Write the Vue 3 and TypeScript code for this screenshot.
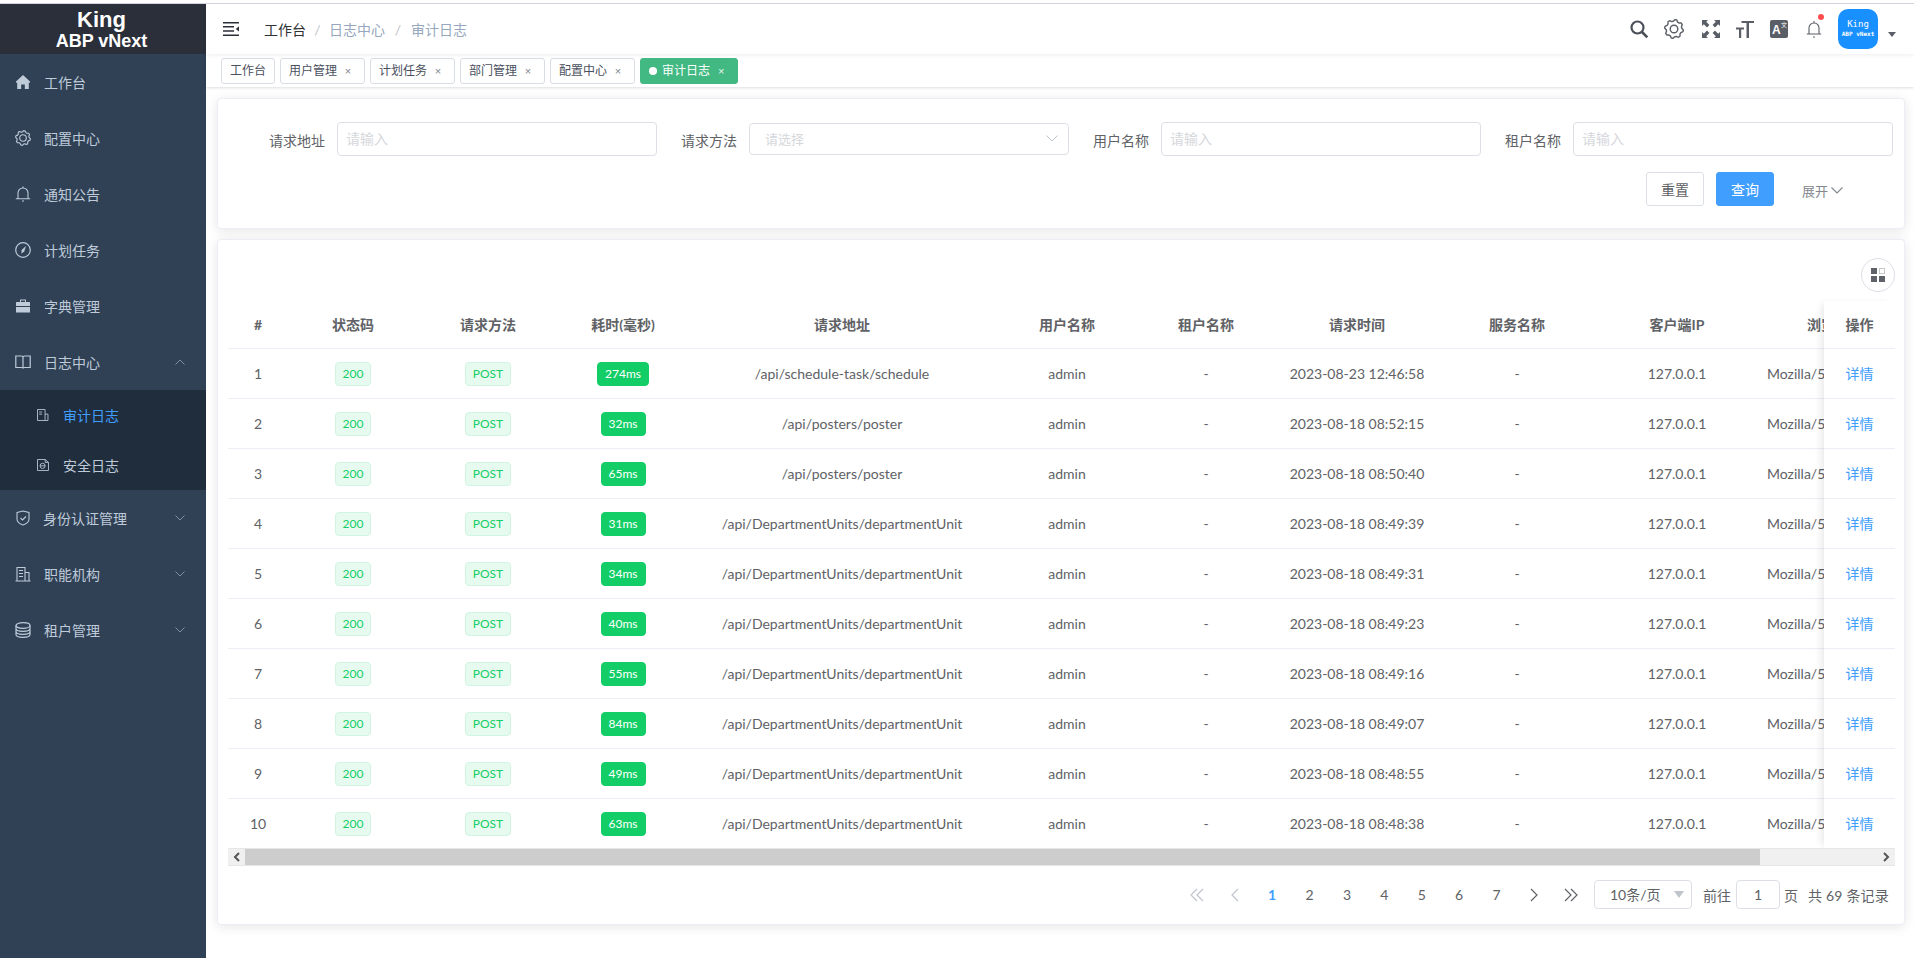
<script setup lang="ts">
interface Row { no: number; ms: number; url: string; time: string }
const schedule = '/api/schedule-task/schedule'
const poster = '/api/posters/poster'
const dept = '/api/DepartmentUnits/departmentUnit'
const rows: Row[] = [
  { no: 1, ms: 274, url: schedule, time: '2023-08-23 12:46:58' },
  { no: 2, ms: 32, url: poster, time: '2023-08-18 08:52:15' },
  { no: 3, ms: 65, url: poster, time: '2023-08-18 08:50:40' },
  { no: 4, ms: 31, url: dept, time: '2023-08-18 08:49:39' },
  { no: 5, ms: 34, url: dept, time: '2023-08-18 08:49:31' },
  { no: 6, ms: 40, url: dept, time: '2023-08-18 08:49:23' },
  { no: 7, ms: 55, url: dept, time: '2023-08-18 08:49:16' },
  { no: 8, ms: 84, url: dept, time: '2023-08-18 08:49:07' },
  { no: 9, ms: 49, url: dept, time: '2023-08-18 08:48:55' },
  { no: 10, ms: 63, url: dept, time: '2023-08-18 08:48:38' },
]
const columns = [
  { t: '#', w: 60 }, { t: '状态码', w: 130 }, { t: '请求方法', w: 140 }, { t: '耗时(毫秒)', w: 130 },
  { t: '请求地址', w: 308 }, { t: '用户名称', w: 142 }, { t: '租户名称', w: 136 }, { t: '请求时间', w: 166 },
  { t: '服务名称', w: 154 }, { t: '客户端IP', w: 166 }, { t: '浏览器', w: 136 },
]
const tags = ['用户管理', '计划任务', '部门管理', '配置中心']
const filters = [
  { label: '请求地址', ph: '请输入', select: false },
  { label: '请求方法', ph: '请选择', select: true },
  { label: '用户名称', ph: '请输入', select: false },
  { label: '租户名称', ph: '请输入', select: false },
]
const pages = [1, 2, 3, 4, 5, 6, 7]

function gear(size: number, teeth: number, outer: number, inner: number): string {
  const c = size / 2
  const pts: string[] = []
  const n = teeth * 4
  for (let i = 0; i < n; i++) {
    const a = ((i + 0.5) / n) * Math.PI * 2
    const r = i % 4 < 2 ? outer : inner
    pts.push(`${(c + r * Math.cos(a)).toFixed(2)} ${(c + r * Math.sin(a)).toFixed(2)}`)
  }
  return 'M' + pts.join('L') + 'Z'
}
const gearSmall = gear(16, 8, 7.4, 6.1)
const gearBig = gear(20, 8, 9.4, 7.8)
</script>

<template>
  <div class="app">
    <aside class="side">
      <div class="logo">
        <div class="logo-a">King</div>
        <div class="logo-b">ABP vNext</div>
      </div>
      <nav>
        <div class="mi">
          <svg class="ic" viewBox="0 0 16 16"><path fill="currentColor" d="M8 1 1 7.600v1.200h1.200V15h4V10.400h3.600V15h4V8.800H15V7.600z"/></svg>
          <span>工作台</span>
        </div>
        <div class="mi">
          <svg class="ic" viewBox="0 0 16 16" fill="none" stroke="currentColor" stroke-width="1.100" stroke-linejoin="round"><path :d="gearSmall"/><circle cx="8" cy="8" r="3.300"/></svg>
          <span>配置中心</span>
        </div>
        <div class="mi">
          <svg class="ic" viewBox="0 0 16 16" fill="none" stroke="currentColor" stroke-width="1.100"><path d="M3 12.500V7a5 5 0 0 1 10 0v5.500M.8 12.800h14.400"/><path d="M8 .5V2M7 15h2"/></svg>
          <span>通知公告</span>
        </div>
        <div class="mi">
          <svg class="ic" viewBox="0 0 16 16"><circle cx="8" cy="8" r="7.300" fill="none" stroke="currentColor" stroke-width="1.200"/><path fill="currentColor" d="M11 4 9.300 9.300 6.400 11.800 6.600 8z"/></svg>
          <span>计划任务</span>
        </div>
        <div class="mi">
          <svg class="ic" viewBox="0 0 16 16"><path fill="currentColor" d="M5 1.500h6V4h3.500A.5.5 0 0 1 15 4.500V8H1V4.500A.5.5 0 0 1 1.500 4H5zm1 1V4h4V2.500zM1 9h14v5.500H1z"/></svg>
          <span>字典管理</span>
        </div>
        <div class="mi">
          <svg class="ic" viewBox="0 0 16 16" fill="none" stroke="currentColor" stroke-width="1.200"><path d="M.8 2H6.500C7.500 2 8 2.600 8 3.500V14.500C8 13.800 7.500 13.500 6.800 13.500H.8zM15.200 2H9.500C8.500 2 8 2.600 8 3.500V14.500C8 13.800 8.500 13.500 9.200 13.500H15.200z"/></svg>
          <span>日志中心</span>
          <svg class="chev" viewBox="0 0 10 6" fill="none" stroke="currentColor"><path d="M.5 5.500 5 1l4.500 4.500"/></svg>
        </div>
        <div class="sub">
          <div class="si active">
            <svg class="sic" viewBox="0 0 14 14" fill="none" stroke="#bfcbd9" stroke-width="1"><path d="M.6.600H9.400V13.400H.6zM2.500 3.500H6M2.500 6H6M9.400 6H12.800V13.400H9.400"/></svg>
            <span>审计日志</span>
          </div>
          <div class="si">
            <svg class="sic" viewBox="0 0 14 14" fill="none" stroke="#bfcbd9" stroke-width="1"><path d="M.6.600H9.500L13.400 4V13.400H.6zM9.500.6V4H13.400"/><circle cx="6.500" cy="8" r="3"/><path d="M3.500 8H9.500"/></svg>
            <span>安全日志</span>
          </div>
        </div>
        <div class="mi wide">
          <svg class="ic" viewBox="0 0 16 16" fill="none" stroke="currentColor" stroke-width="1.100"><path d="M2 2.500 8 1l6 1.500V9c0 3-3 5-6 6-3-1-6-3-6-6z"/><path d="m5.500 8 2 2 3.500-3.500"/></svg>
          <span>身份认证管理</span>
          <svg class="chev" viewBox="0 0 10 6" fill="none" stroke="currentColor"><path d="M.5.500 5 5 9.500.5"/></svg>
        </div>
        <div class="mi">
          <svg class="ic" viewBox="0 0 16 16" fill="none" stroke="currentColor" stroke-width="1.100"><path d="M.5 15H15.500M2 15V1.500H10V15M10 6.500H14V15M4 4.500H8M4 7.500H8M4 10.500H8"/></svg>
          <span>职能机构</span>
          <svg class="chev" viewBox="0 0 10 6" fill="none" stroke="currentColor"><path d="M.5.500 5 5 9.500.5"/></svg>
        </div>
        <div class="mi">
          <svg class="ic" viewBox="0 0 16 16" fill="none" stroke="currentColor" stroke-width="1.200"><ellipse cx="8" cy="3.500" rx="7" ry="2.800"/><path d="M1 3.500V12.500C1 14 4 15.300 8 15.300S15 14 15 12.500V3.500M1 6.500C1 8 4 9.300 8 9.300S15 8 15 6.500M1 9.500C1 11 4 12.300 8 12.300S15 11 15 9.500"/></svg>
          <span>租户管理</span>
          <svg class="chev" viewBox="0 0 10 6" fill="none" stroke="currentColor"><path d="M.5.500 5 5 9.500.5"/></svg>
        </div>
      </nav>
    </aside>

    <main class="main">
      <header class="navbar">
        <svg class="burger" viewBox="0 0 16 14"><path fill="#2b2f3a" d="M0 0h16v1.600H0zM0 4h11v1.600H0zM0 8.200h11v1.600H0zM0 12.400h16V14H0zM16 4.200v5.400l-3.200-2.700z"/></svg>
        <div class="crumbs">
          <span class="c0">工作台</span><i>/</i><span>日志中心</span><i>/</i><span>审计日志</span>
        </div>
        <div class="tools">
          <svg class="t" viewBox="0 0 18 18" fill="none" stroke="#4a4f58" stroke-width="2.200"><circle cx="7.500" cy="7.500" r="6"/><path d="m12 12 5.300 5.300" stroke-width="2.600"/></svg>
          <svg class="t t-gear" viewBox="0 0 20 20" fill="none" stroke="#5a5e66" stroke-width="1.400" stroke-linejoin="round"><path :d="gearBig"/><circle cx="10" cy="10" r="3.800"/></svg>
          <svg class="t t-full" viewBox="0 0 18 18"><path fill="#5a5e66" d="M0 0h6L4.200 1.800 7.400 5 5 7.400 1.800 4.200 0 6zM18 0v6l-1.800-1.800L13 7.400 10.600 5l3.200-3.200L12 0zM0 18v-6l1.800 1.800L5 10.600 7.400 13l-3.200 3.200L6 18zM18 18h-6l1.800-1.800L10.600 13l2.400-2.400 3.200 3.200L18 12z"/></svg>
          <svg class="t t-size" viewBox="0 0 18 18"><path fill="#5a5e66" d="M5.500 1h12.500v2h-5v15h-2.500V3h-5zM0 7.500h8v2H5.200V18H3V9.500H0z"/></svg>
          <div class="trans"><span class="ta">A</span><span class="tz">文</span></div>
          <div class="bell">
            <svg viewBox="0 0 16 18" fill="none" stroke="#5a5e66" stroke-width="1.100"><path d="M3 13.500V8a5 5 0 0 1 10 0v5.500M.8 14h14.400M8 1v2"/><path d="M7 17h2"/></svg>
            <b></b>
          </div>
          <div class="avatar"><span class="av-a">King</span><span class="av-b">ABP vNext</span></div>
          <span class="caret"></span>
        </div>
      </header>
      <div class="tagbar">
        <span class="tag">工作台</span>
        <span v-for="t in tags" :key="t" class="tag">{{ t }}<em>×</em></span>
        <span class="tag on"><u></u>审计日志<em>×</em></span>
      </div>

      <div class="content">
        <section class="card search">
          <div class="form">
            <div v-for="f in filters" :key="f.label" class="fi">
              <label>{{ f.label }}</label>
              <div class="inp" :class="{ sel: f.select }">
                {{ f.ph }}
                <svg v-if="f.select" viewBox="0 0 12 7" fill="none" stroke="#c0c4cc"><path d="M.5.500 6 6 11.500.5"/></svg>
              </div>
            </div>
          </div>
          <div class="btns">
            <button class="btn" type="button">重置</button>
            <button class="btn pri" type="button">查询</button>
            <span class="expand">展开<svg viewBox="0 0 12 7" fill="none" stroke="#82868e" stroke-width="1.100"><path d="M.5.500 6 6 11.500.5"/></svg></span>
          </div>
        </section>

        <section class="card list">
          <div class="bar">
            <div class="circle">
              <svg viewBox="0 0 14 14"><path fill="#5f6268" d="M0 0h6v6H0zM0 8h6v6H0zM8 8h6v6H8z"/><path fill="none" stroke="#8d9096" stroke-dasharray="1 1" d="M8.500.5h5v5h-5z"/></svg>
            </div>
          </div>
          <div class="twrap">
            <div class="tscroll">
              <table>
                <colgroup><col v-for="c in columns" :key="c.t" :style="{ width: c.w + 'px' }" /></colgroup>
                <thead>
                  <tr><th v-for="c in columns" :key="c.t">{{ c.t }}</th></tr>
                </thead>
                <tbody>
                  <tr v-for="r in rows" :key="r.no">
                    <td>{{ r.no }}</td>
                    <td><span class="bd">200</span></td>
                    <td><span class="bd">POST</span></td>
                    <td><span class="bd solid">{{ r.ms }}ms</span></td>
                    <td>{{ r.url }}</td>
                    <td>admin</td>
                    <td>-</td>
                    <td>{{ r.time }}</td>
                    <td>-</td>
                    <td>127.0.0.1</td>
                    <td class="ua">Mozilla/5.0 (Windows NT 10.0)</td>
                  </tr>
                </tbody>
              </table>
            </div>
            <div class="fixed">
              <div class="fh">操作</div>
              <div v-for="r in rows" :key="r.no" class="fc">详情</div>
            </div>
            <div class="hbar">
              <span class="sb-l"><svg viewBox="0 0 7 10" fill="none" stroke="#555" stroke-width="2"><path d="M6 1 2 5l4 4"/></svg></span>
              <span class="thumb"></span>
              <span class="sb-r"><svg viewBox="0 0 7 10" fill="none" stroke="#555" stroke-width="2"><path d="m1 1 4 4-4 4"/></svg></span>
            </div>
          </div>
          <div class="pager">
            <span class="pi off"><svg viewBox="0 0 14 14" fill="none" stroke="#c0c4cc" stroke-width="1.200"><path d="M7 1 1 7l6 6M13 1 7 7l6 6"/></svg></span>
            <span class="pi off"><svg class="one" viewBox="0 0 8 14" fill="none" stroke="#c0c4cc" stroke-width="1.200"><path d="M7 1 1 7l6 6"/></svg></span>
            <span v-for="p in pages" :key="p" class="pi" :class="{ cur: p === 1 }">{{ p }}</span>
            <span class="pi"><svg class="one" viewBox="0 0 8 14" fill="none" stroke="#606266" stroke-width="1.200"><path d="m1 1 6 6-6 6"/></svg></span>
            <span class="pi"><svg viewBox="0 0 14 14" fill="none" stroke="#606266" stroke-width="1.200"><path d="m1 1 6 6-6 6M7 1l6 6-6 6"/></svg></span>
            <div class="psize">10条/页<i></i></div>
            <span class="goto">前往</span>
            <div class="pinput">1</div>
            <span class="ye">页</span>
            <span class="total">共 69 条记录</span>
          </div>
        </section>
      </div>
    </main>
  </div>
</template>

<style>
html, body { margin: 0; background: #fff; }
</style>

<style scoped>
.app {
  display: flex;
  height: 955px;
  padding-top: 3px;
  font-family: Lato, "Noto Sans CJK SC", sans-serif;
  font-size: 14px;
  color: #606266;
  overflow: hidden;
  box-sizing: content-box;
  position: relative;
}
.app::before {
  content: "";
  position: absolute;
  left: 0;
  right: 0;
  top: 3px;
  height: 1px;
  background: #d4d4dc;
  z-index: 5;
}
.app > * { margin-top: 1px; }
.side { width: 206px; flex: none; background: #304156; color: #bfcbd9; }
.logo { height: 50px; background: #2b2f3a; color: #fff; text-align: center; font-family: "Liberation Sans", sans-serif; font-weight: 700; padding: 4px 3px 0 0; box-sizing: border-box; }
.logo-a { font-size: 22px; line-height: 24px; }
.logo-b { font-size: 18px; line-height: 18px; }
.mi { height: 56px; display: flex; align-items: center; padding-left: 15px; padding-right: 20px; position: relative; }
.mi span { margin-left: 13px; }
.mi.wide span { margin-left: 12px; }
.ic { width: 16px; height: 16px; flex: none; }
.chev { width: 10px; height: 6px; position: absolute; left: 175px; top: 25px; opacity: .55; }
.sub { background: #1f2d3d; }
.si { height: 50px; display: flex; align-items: center; padding-left: 37px; }
.si span { margin-left: 14px; }
.si.active { color: #409eff; }
.sic { width: 12px; height: 14px; flex: none; }

.main { flex: 1; min-width: 0; display: flex; flex-direction: column; }
.navbar { height: 50px; flex: none; display: flex; align-items: center; padding-left: 17px; background: #fff; box-shadow: 0 1px 4px rgba(0, 21, 41, .08); position: relative; z-index: 2; }
.burger { width: 16px; height: 14px; flex: none; margin-top: -1px; }
.crumbs { margin-left: 25px; color: #97a8be; display: flex; align-items: center; }
.crumbs .c0 { color: #303133; }
.crumbs i { font-style: normal; color: #c0c4cc; width: 23px; text-align: center; }
.crumbs span + i + span + i { width: 26px; }
.tools { margin-left: auto; display: flex; align-items: center; position: relative; height: 50px; width: 284px; }
.t { width: 18px; height: 18px; flex: none; margin-right: 16px; }
.t-gear { width: 20px; height: 20px; margin-right: 18px; }
.trans { width: 18px; height: 18px; background: #5a5e66; border-radius: 2px; position: relative; color: #fff; flex: none; margin-right: 18px; overflow: hidden; font-family: "Liberation Sans", sans-serif; }
.ta { position: absolute; left: 2px; top: 4px; font-size: 12px; line-height: 13px; font-weight: 700; }
.tz { position: absolute; right: 1px; top: 1px; font-size: 6px; line-height: 7px; font-family: "Noto Sans CJK SC", sans-serif; }
.bell { width: 16px; height: 18px; position: relative; flex: none; margin-right: 16px; }
.bell svg { width: 16px; height: 18px; display: block; }
.bell b { position: absolute; width: 6px; height: 6px; border-radius: 50%; background: #ff4d4f; right: -2px; top: -6px; box-shadow: 0 0 0 1px #fff; }
.avatar { width: 40px; height: 40px; border-radius: 10px; background: #1890ff; color: #fff; display: flex; flex-direction: column; align-items: center; justify-content: center; font-family: "DejaVu Sans Mono", monospace; flex: none; }
.av-a { font-size: 9px; line-height: 10px; }
.av-b { font-size: 6px; line-height: 10px; font-weight: 700; }
.caret { width: 0; height: 0; border: 4px solid transparent; border-top: 5px solid #5a5e66; border-bottom: 0; margin-left: 10px; margin-top: 11px; flex: none; }

.tagbar { height: 33px; flex: none; box-sizing: border-box; display: flex; gap: 5px; padding: 4px 0 0 15px; background: #fff; box-shadow: 0 1px 3px 0 rgba(0, 0, 0, .12), 0 0 3px 0 rgba(0, 0, 0, .04); position: relative; z-index: 1; }
.tag { height: 26px; box-sizing: border-box; border: 1px solid #d8dce5; border-radius: 3px; padding: 0 8px; font-size: 12px; line-height: 24px; color: #495060; background: #fff; white-space: nowrap; }
.tag em { display: inline-block; width: 8px; text-align: center; font-style: normal; font-family: "Liberation Sans", sans-serif; font-size: 11px; color: #7f858f; margin: 0 4px 0 7px; }
.tag.on { background: #42b983; border-color: #42b983; color: #fff; }
.tag.on em { color: #e6f5ee; }
.tag u { display: inline-block; width: 8px; height: 8px; background: #fff; border-radius: 50%; margin-right: 5px; }

.content { flex: 1; padding: 11px 9px 0 11px; }
.card { background: #fff; border: 1px solid #ebeef5; border-radius: 4px; box-shadow: 0 2px 12px 0 rgba(0, 0, 0, .1); box-sizing: border-box; }
.search { height: 131px; margin-bottom: 10px; padding-top: 23px; }
.form { display: grid; grid-template-columns: repeat(4, 412px); padding-left: 27px; }
.fi { display: flex; align-items: center; }
.fi label { width: 92px; box-sizing: border-box; padding-right: 12px; text-align: right; position: relative; top: 1px; }
.inp { width: 320px; height: 34px; box-sizing: border-box; border: 1px solid #dcdfe6; border-radius: 4px; padding-left: 8px; line-height: 32px; color: #d5d7dc; position: relative; }
.inp.sel { height: 32px; padding-left: 15px; font-size: 13px; line-height: 31px; }
.inp svg { position: absolute; right: 10px; top: 11px; width: 12px; height: 7px; }
.btns { display: flex; align-items: center; padding-left: 1428px; margin-top: 16px; }
.btn { width: 58px; height: 34px; box-sizing: border-box; border: 1px solid #dcdfe6; border-radius: 3px; background: #fff; color: #606266; font: inherit; font-size: 14px; padding: 0; }
.btn.pri { background: #409eff; border-color: #409eff; color: #fff; margin-left: 12px; }
.expand { margin-left: 28px; font-size: 13px; color: #82868e; display: flex; align-items: center; position: relative; top: 1px; }
.expand svg { width: 12px; height: 7px; margin-left: 3px; }

.list { height: 686px; padding: 18px 9px 0 10px; }
.bar { display: flex; justify-content: flex-end; height: 34px; margin-bottom: 8px; }
.circle { width: 34px; height: 34px; box-sizing: border-box; border: 1px solid #dcdfe6; border-radius: 50%; display: flex; align-items: center; justify-content: center; }
.circle svg { width: 14px; height: 14px; }
.twrap { position: relative; height: 566px; }
.tscroll { overflow: hidden; height: 548px; }
table { border-collapse: separate; border-spacing: 0; table-layout: fixed; width: 1668px; }
th { height: 48px; padding: 0; font-size: 14px; font-weight: 700; color: #606266; border-bottom: 1px solid #ebeef5; text-align: center; white-space: nowrap; box-sizing: content-box; }
td { height: 49px; padding: 0; text-align: center; border-bottom: 1px solid #ebeef5; white-space: nowrap; overflow: hidden; box-sizing: content-box; }
td.ua { text-align: left; padding-left: 7px; }
tbody tr:last-child td { border-bottom: 0; }
.bd { display: inline-block; height: 24px; line-height: 22px; box-sizing: border-box; padding: 0 7px; font-size: 12px; border: 1px solid #d0f5e0; background: #e7faf0; color: #13ce66; border-radius: 4px; vertical-align: middle; }
.bd.solid { background: #13ce66; border-color: #13ce66; color: #fff; }
.fixed { position: absolute; right: 0; top: 1px; width: 71px; background: #fff; box-shadow: -5px 0 8px -3px rgba(0, 0, 0, .1); text-align: center; height: 547px; z-index: 1; }
.fh { height: 47px; line-height: 47px; font-weight: 700; border-bottom: 1px solid #ebeef5; }
.fc { height: 49px; line-height: 49px; color: #409eff; border-bottom: 1px solid #ebeef5; }
.fc:last-child { border-bottom: 0; }
.hbar { position: absolute; left: 0; right: 0; bottom: 0; height: 18px; background: #f0f0f0; display: flex; box-sizing: border-box; border-top: 1px solid #e6e6e6; border-bottom: 1px solid #e6e6e6; z-index: 2; }
.sb-l, .sb-r { width: 17px; display: flex; align-items: center; justify-content: center; flex: none; }
.sb-l svg, .sb-r svg { width: 7px; height: 10px; }
.sb-r { margin-left: auto; }
.thumb { width: 1515px; background: #cdcdcd; }

.pager { display: flex; align-items: center; justify-content: flex-end; margin-top: 14px; height: 29px; padding-right: 6px; }
.pi { width: 37.400px; text-align: center; flex: none; display: flex; align-items: center; justify-content: center; }
.pi svg { width: 14px; height: 14px; }
.pi svg.one { width: 8px; }
.pi.cur { color: #409eff; font-weight: 700; }
.psize { width: 98px; height: 29px; margin-left: 4px; box-sizing: border-box; border: 1px solid #dcdfe6; border-radius: 4px; line-height: 27px; padding-left: 15px; font-size: 14px; position: relative; flex: none; }
.psize i { position: absolute; right: 7px; top: 10px; border: 5px solid transparent; border-top: 7px solid #c0c4cc; border-bottom: 0; }
.goto { margin-left: 11px; }
.pinput { width: 44px; height: 29px; margin-left: 5px; box-sizing: border-box; border: 1px solid #dcdfe6; border-radius: 4px; text-align: center; line-height: 27px; }
.ye { margin-left: 4px; }
.total { margin-left: 10px; letter-spacing: .2px; }
</style>
